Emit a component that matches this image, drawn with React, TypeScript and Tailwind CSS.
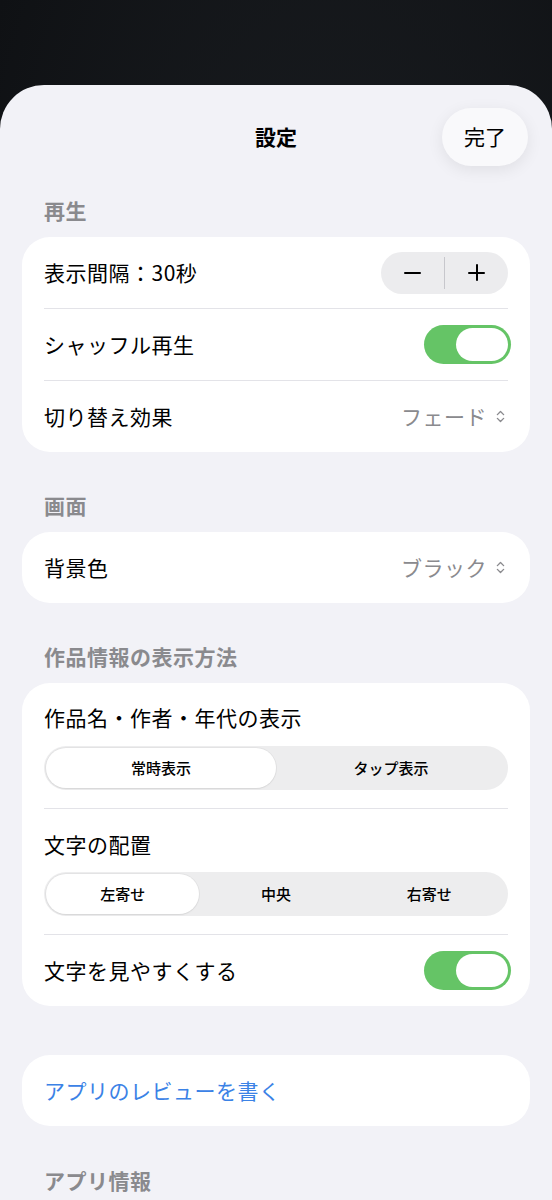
import { ChevronsUpDown } from "lucide-react";

const font = "font-['Noto_Sans_CJK_JP','Noto_Sans',sans-serif]";

function SectionHeader({ title }: { title: string }) {
  return (
    <div className="px-[44px] h-[26px] leading-[26px] mb-[14px] text-[21px] tracking-[0.5px] font-semibold text-[#8a8a8e]">
      {title}
    </div>
  );
}

function Toggle() {
  return (
    <div className="w-[87px] h-[39px] -mr-[3px] rounded-full bg-[#65c466] p-[3px] flex justify-end">
      <div className="w-[52px] h-[33px] rounded-full bg-white" />
    </div>
  );
}

function Picker({ value }: { value: string }) {
  return (
    <div className="flex items-center gap-[6px] text-[21px] tracking-[0.5px] text-[#8a8a8e]">
      <span>{value}</span>
      <ChevronsUpDown size={15} strokeWidth={2.2} className="text-[#8a8a8e]" />
    </div>
  );
}

function Segmented({ options, selected }: { options: string[]; selected: number }) {
  return (
    <div
      className={
        options.length === 2
          ? "grid grid-cols-2 h-[44px] rounded-full bg-[#ededee] p-[2px]"
          : "grid grid-cols-3 h-[44px] rounded-full bg-[#ededee] p-[2px]"
      }
    >
      {options.map((o, i) => (
        <div
          key={o}
          className={
            i === selected
              ? "flex items-center justify-center rounded-full bg-white text-[15px] font-medium text-black shadow-[0_0_0_1px_rgba(0,0,0,0.04),0_1px_2px_rgba(0,0,0,0.06)]"
              : "flex items-center justify-center text-[15px] font-medium text-black"
          }
        >
          {o}
        </div>
      ))}
    </div>
  );
}

const Divider = () => <div className="mx-[22px] h-px bg-[#e3e3e8]" />;

const rowText = "text-[21px] tracking-[0.5px] text-black";

export default function App() {
  return (
    <div
      className={`${font} h-[1200px] overflow-hidden bg-[radial-gradient(ellipse_at_60%_100%,#272b31_0%,#1a1d21_45%,#0f1114_100%)] pt-[85px]`}
    >
      <div className="min-h-[1200px] rounded-t-[44px] bg-[#f2f2f7]">
        {/* header */}
        <div className="grid grid-cols-[1fr_auto_1fr] items-center pt-[23px]">
          <div />
          <div className="text-[21px] font-bold text-black">設定</div>
          <div className="flex justify-end pr-[24px]">
            <button className="h-[58px] w-[86px] rounded-full bg-[#f9f9fb] text-[21px] text-black shadow-[0_4px_16px_rgba(0,0,0,0.08)]">
              完了
            </button>
          </div>
        </div>

        <div className="mt-[31px]">
          <SectionHeader title="再生" />
          <div className="mx-[22px] rounded-[28px] bg-white">
            <div className="h-[71px] px-[22px] flex items-center justify-between">
              <span className={rowText}>表示間隔：30秒</span>
              <div className="flex items-center h-[42px] w-[127px] rounded-full bg-[#ececee]">
                <div className="flex-1 flex items-center justify-center">
                  <div className="w-[17px] h-[2px] bg-black rounded-full" />
                </div>
                <div className="w-px h-[32px] bg-[#c7c7cc]" />
                <div className="flex-1 flex items-center justify-center">
                  <div className="relative w-[17px] h-[17px]">
                    <div className="absolute left-0 top-[7.5px] w-[17px] h-[2px] bg-black rounded-full" />
                    <div className="absolute top-0 left-[7.5px] h-[17px] w-[2px] bg-black rounded-full" />
                  </div>
                </div>
              </div>
            </div>
            <Divider />
            <div className="h-[71px] px-[22px] flex items-center justify-between">
              <span className={rowText}>シャッフル再生</span>
              <Toggle />
            </div>
            <Divider />
            <div className="h-[71px] px-[22px] flex items-center justify-between">
              <span className={rowText}>切り替え効果</span>
              <Picker value="フェード" />
            </div>
          </div>
        </div>

        <div className="mt-[40px]">
          <SectionHeader title="画面" />
          <div className="mx-[22px] rounded-[28px] bg-white">
            <div className="h-[71px] px-[22px] flex items-center justify-between">
              <span className={rowText}>背景色</span>
              <Picker value="ブラック" />
            </div>
          </div>
        </div>

        <div className="mt-[40px]">
          <SectionHeader title="作品情報の表示方法" />
          <div className="mx-[22px] rounded-[28px] bg-white">
            <div className="px-[22px] pt-[20px] pb-[18px]">
              <div className={`h-[28px] leading-[28px] ${rowText}`}>作品名・作者・年代の表示</div>
              <div className="mt-[15px]">
                <Segmented options={["常時表示", "タップ表示"]} selected={0} />
              </div>
            </div>
            <Divider />
            <div className="px-[22px] pt-[21px] pb-[18px]">
              <div className={`h-[28px] leading-[28px] ${rowText}`}>文字の配置</div>
              <div className="mt-[14px]">
                <Segmented options={["左寄せ", "中央", "右寄せ"]} selected={0} />
              </div>
            </div>
            <Divider />
            <div className="h-[71px] px-[22px] flex items-center justify-between">
              <span className={rowText}>文字を見やすくする</span>
              <Toggle />
            </div>
          </div>
        </div>

        <div className="mt-[49px] mx-[22px] rounded-[28px] bg-white h-[71px] px-[22px] flex items-center">
          <span className="text-[21px] tracking-[0.5px] text-[#3b82e6]">アプリのレビューを書く</span>
        </div>

        <div className="mt-[41px]">
          <SectionHeader title="アプリ情報" />
        </div>
      </div>
    </div>
  );
}
